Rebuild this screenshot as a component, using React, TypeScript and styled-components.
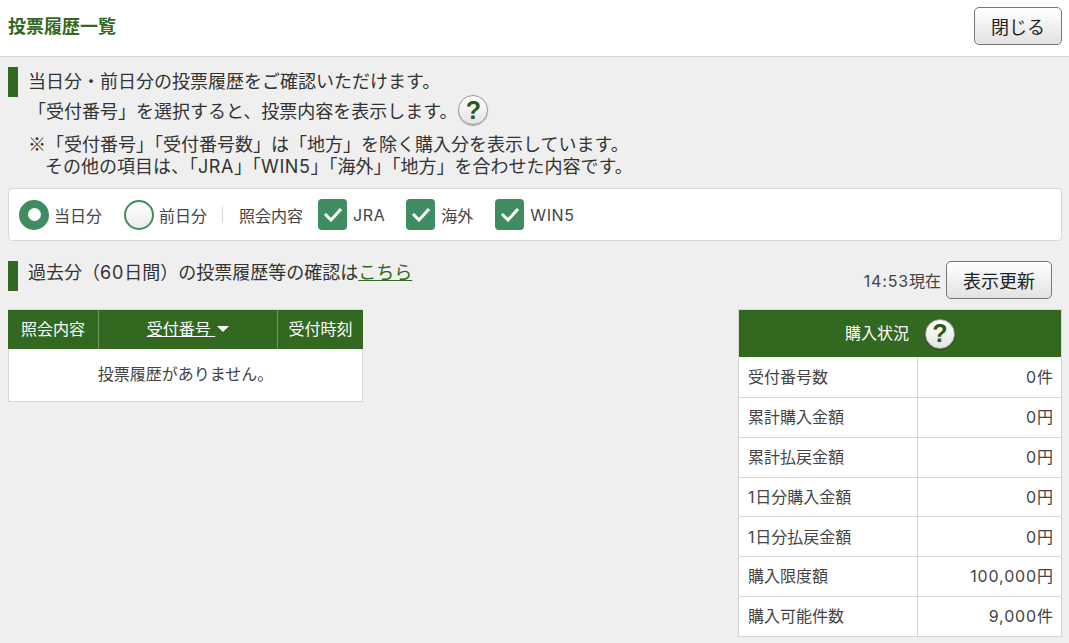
import React from "react";
import styled, { createGlobalStyle } from "styled-components";

const Global = createGlobalStyle`
  html, body { margin: 0; padding: 0; background: #efefef; }
  body { font-family: "Inter", "Noto Sans CJK JP", sans-serif; color: #333; }
  * { box-sizing: border-box; }
`;
const GREEN = "#336821";
const CHECK = "#408c61";

const Page = styled.div`width: 1069px; height: 643px; overflow: hidden; display: flex; flex-direction: column;`;
const Header = styled.header`
  height: 57px; background: #fff; border-bottom: 1px solid #d5d5d5;
  display: flex; align-items: flex-start; justify-content: space-between; padding: 7px 7px 0 8px;
`;
const Title = styled.h1`margin: 9px 0 0; font-size: 18px; line-height: 22px; font-weight: 700; color: ${GREEN};`;
const Button = styled.button<{ $w: number }>`
  width: ${p => p.$w}px; height: 38px; padding: 0; font: inherit; font-size: 18px; color: #222;
  border: 1px solid #777; border-radius: 5px; background: linear-gradient(#fff, #e2e2e2);
`;
const Main = styled.main`padding: 10px 7px 0 8px; display: flex; flex-direction: column;`;
const Lead = styled.div`border-left: 10px solid ${GREEN}; height: 30px; padding-left: 10px; font-size: 18px; line-height: 29px; white-space: nowrap;`;
const Line2 = styled.div`display: flex; align-items: center; gap: 1px; height: 30px; margin-top: -2px; padding-left: 20px; font-size: 18px; white-space: nowrap;`;
const Notes = styled.div`margin-top: 7px; padding-left: 20px; font-size: 18px; line-height: 23px; white-space: nowrap;`;
const NoteMark = styled.span`font-family: "Noto Sans CJK JP", sans-serif;`;
const NoteIndent = styled.div`padding-left: 17px; margin-top: -1px;`;
const HelpIcon = styled.span<{ $size: number }>`
  display: inline-flex; align-items: center; justify-content: center; flex: none;
  width: ${p => p.$size}px; height: ${p => p.$size}px; border-radius: 50%;
  background: linear-gradient(#fff, #e4e4e4); border: 1px solid #999;
  box-shadow: 0 1px 1px rgba(0,0,0,.3);
  color: #2b5a1c; font-size: 25px; font-weight: 800; font-family: "Liberation Sans", sans-serif;
`;
const Filter = styled.div`
  margin-top: 10px; height: 53px; background: #fff; border: 1px solid #d8d8d8; border-radius: 4px;
  display: flex; align-items: center; padding-left: 10px; font-size: 16px; color: #444;
`;
const Radio = styled.span<{ $on?: boolean }>`
  width: 30px; height: 30px; border-radius: 50%; flex: none; margin-right: 5px;
  display: flex; align-items: center; justify-content: center;
  border: 2px solid ${CHECK};
  background: ${p => p.$on ? CHECK : "linear-gradient(#fff,#ececec)"};
  &::after { content: ""; display: ${p => p.$on ? "block" : "none"}; width: 13px; height: 13px; border-radius: 50%; background: #fff; }
`;
const Opt = styled.span<{ $gap: number }>`display: flex; align-items: center; margin-right: ${p => p.$gap}px;`;
const Sep = styled.span`width: 1px; height: 16px; background: #d8d8d8; margin-right: 16px;`;
const CheckBox = styled.span`
  width: 29px; height: 31px; border-radius: 4px; background: ${CHECK}; flex: none; margin-right: 6px;
  display: flex; align-items: center; justify-content: center;
`;
const PastRow = styled.div`margin-top: 20px; height: 38px; display: flex; justify-content: space-between; align-items: flex-start;`;
const PastLead = styled(Lead)`line-height: 24px;`;
const MoreLink = styled.a`color: ${GREEN}; text-decoration: underline;`;
const Updater = styled.div`display: flex; align-items: center; gap: 5px; margin-right: 10px; font-size: 16px; color: #444;`;
const Tables = styled.div`margin-top: 10px; display: flex; justify-content: space-between; align-items: flex-start;`;
const HistoryTable = styled.div`width: 355px; border: 1px solid #d5d5d5; background: #fff;`;
const HistoryHead = styled.div`
  height: 40px; margin: -1px -1px 0; background: ${GREEN}; display: grid; grid-template-columns: 90px 179px 86px;
  color: #fff; font-size: 16px; border-top: 1px solid #d5d5d5;
`;
const HeadCell = styled.div`
  display: flex; align-items: center; justify-content: center; white-space: nowrap; padding-bottom: 4px;
  & + & { border-left: 1px solid #6f9560; }
`;
const SortLabel = styled.span`text-decoration: underline; font-weight: 400; white-space: pre;`;
const Caret = styled.span`width: 0; height: 0; border: 6px solid transparent; border-top: 6px solid #fff; border-bottom: 0; margin: 2px 0 0 2px;`;
const Empty = styled.div`height: 52px; padding-bottom: 4px; display: flex; align-items: center; justify-content: center; font-size: 16px; color: #444;`;
const StatusTable = styled.div`width: 324px; border: 1px solid #d5d5d5; background: #fff; font-size: 16px; color: #444;`;
const StatusHead = styled.div`
  height: 47px; background: ${GREEN}; color: #fff; display: flex; align-items: center; justify-content: center;
  gap: 16px; font-size: 16px;
`;
const StatusTitle = styled.span`padding-bottom: 3px;`;
const StatusRow = styled.div`display: grid; grid-template-columns: 179px 1fr; height: 39.75px; border-top: 1px solid #d5d5d5; &:nth-child(2){border-top:0; height: 40px;}`;
const RowLabel = styled.div`display: flex; align-items: center; padding: 0 0 2px 9px; border-right: 1px solid #d5d5d5;`;
const RowValue = styled.div`display: flex; align-items: center; justify-content: flex-end; padding: 0 8px 2px 0;`;
const Num = styled.span`letter-spacing: .85px;`;
const Latin = styled.span`letter-spacing: .6px;`;

const rows: [string, string][] = [
  ["受付番号数", "0件"], ["累計購入金額", "0円"], ["累計払戻金額", "0円"], ["1日分購入金額", "0円"],
  ["1日分払戻金額", "0円"], ["購入限度額", "100,000円"], ["購入可能件数", "9,000件"],
];
const withNums = (text: string) =>
  text.split(/([\d,:]+)/).map((part, i) => (i % 2 ? <Num key={i}>{part}</Num> : <span key={i}>{part}</span>));

const Tick = () => (
  <svg width="20" height="15" viewBox="0 0 20 15" fill="none"><path d="M2 7l6 6 10-11" stroke="#fff" strokeWidth="3" /></svg>
);

export default function App() {
  return (
    <Page>
      <Global />
      <Header>
        <Title>投票履歴一覧</Title>
        <Button $w={88}>閉じる</Button>
      </Header>
      <Main>
        <Lead>当日分・前日分の投票履歴をご確認いただけます。</Lead>
        <Line2>「受付番号」を選択すると、投票内容を表示します。<HelpIcon $size={30}>?</HelpIcon></Line2>
        <Notes>
          <NoteMark>※</NoteMark>「受付番号」「受付番号数」は「地方」を除く購入分を表示しています。
          <NoteIndent>その他の項目は、「<Latin>JRA</Latin>」「<Latin>WIN5</Latin>」「海外」「地方」を合わせた内容です。</NoteIndent>
        </Notes>
        <Filter>
          <Opt $gap={22}><Radio $on />当日分</Opt>
          <Opt $gap={15}><Radio />前日分</Opt>
          <Sep />
          <Opt $gap={15}>照会内容</Opt>
          <Opt $gap={21}><CheckBox><Tick /></CheckBox><Latin>JRA</Latin></Opt>
          <Opt $gap={22}><CheckBox><Tick /></CheckBox>海外</Opt>
          <Opt $gap={0}><CheckBox><Tick /></CheckBox><Latin>WIN5</Latin></Opt>
        </Filter>
        <PastRow>
          <PastLead>過去分（<Num>60</Num>日間）の投票履歴等の確認は<MoreLink href="#">こちら</MoreLink></PastLead>
          <Updater><span>{withNums("14:53現在")}</span><Button $w={106}>表示更新</Button></Updater>
        </PastRow>
        <Tables>
          <HistoryTable>
            <HistoryHead>
              <HeadCell>照会内容</HeadCell>
              <HeadCell><SortLabel>受付番号 </SortLabel><Caret /></HeadCell>
              <HeadCell>受付時刻</HeadCell>
            </HistoryHead>
            <Empty>投票履歴がありません。</Empty>
          </HistoryTable>
          <StatusTable>
            <StatusHead><StatusTitle>購入状況</StatusTitle><HelpIcon $size={30}>?</HelpIcon></StatusHead>
            {rows.map(([l, v]) => (
              <StatusRow key={l}><RowLabel><span>{withNums(l)}</span></RowLabel><RowValue><span>{withNums(v)}</span></RowValue></StatusRow>
            ))}
          </StatusTable>
        </Tables>
      </Main>
    </Page>
  );
}
